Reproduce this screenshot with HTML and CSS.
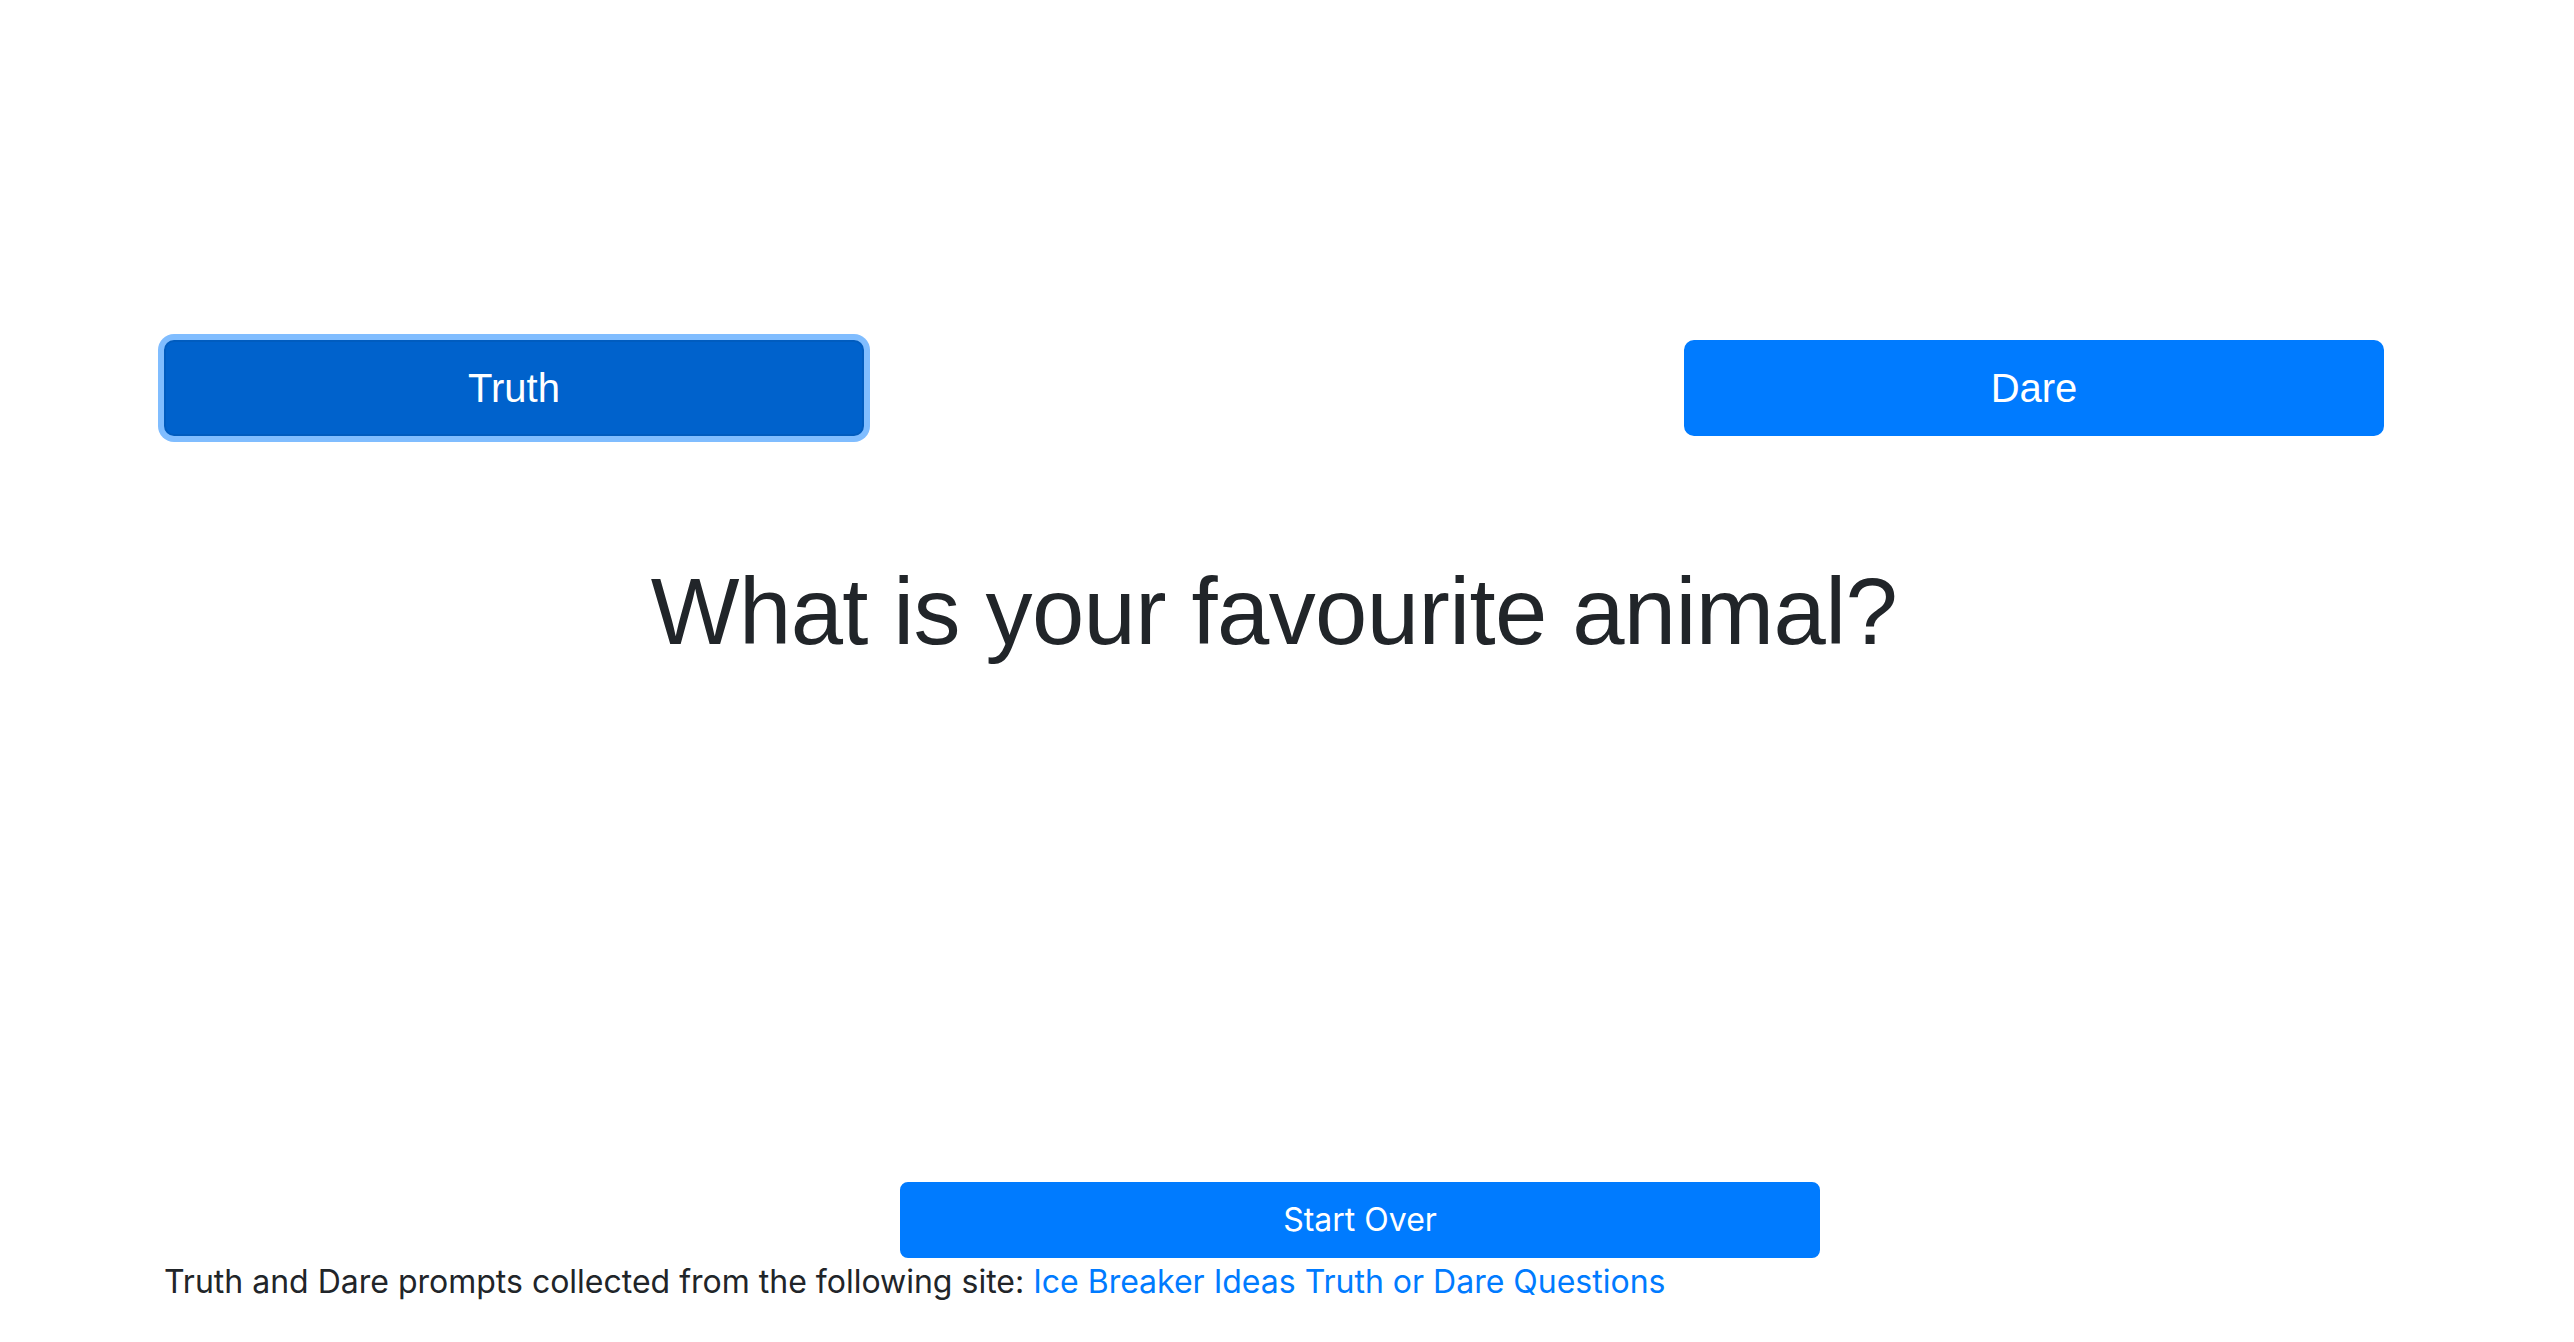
FILE: index.html
```html
<!DOCTYPE html>
<html lang="en">
<head>
<meta charset="utf-8">
<title>Truth or Dare</title>
<link rel="stylesheet" href="styles.css">
</head>
<body>
<main class="container">
  <div class="choices">
    <button class="btn btn-lg btn-focused" type="button">Truth</button>
    <button class="btn btn-lg" type="button">Dare</button>
  </div>
  <h1 class="prompt">What is your favourite animal?</h1>
  <div class="restart-row">
    <button class="btn btn-md" type="button">Start Over</button>
  </div>
  <p class="credit">Truth and Dare prompts collected from the following site: <a href="#">Ice Breaker Ideas Truth or Dare Questions</a></p>
</main>
</body>
</html>
```

FILE: styles.css
```css
html, body {
  margin: 0;
  padding: 0;
  background: #ffffff;
}

body {
  font-family: Inter, "Liberation Sans", sans-serif;
  font-size: 32px;
  line-height: 1.5;
  color: #212529;
}

.container {
  width: 2220px;
  margin-left: 164px;
  padding-top: 340px;
}

.choices {
  display: flex;
  justify-content: space-between;
}

.btn {
  font-family: Inter, "Liberation Sans", sans-serif;
  background: #007bff;
  border: 2px solid #007bff;
  color: #ffffff;
  text-align: center;
  cursor: pointer;
  padding: 0;
}

.btn-lg {
  width: 700px;
  height: 96px;
  font-family: "Liberation Sans", Arial, sans-serif;
  font-size: 40px;
  border-radius: 10px;
}

.btn-focused {
  background: #0062cc;
  border-color: #005cbf;
  box-shadow: 0 0 0 6px rgb(128, 189, 255);
}

.prompt {
  margin: 120px 0 0;
  font-family: "Liberation Sans", Arial, sans-serif;
  font-size: 94px;
  font-weight: 400;
  letter-spacing: -0.6px;
  line-height: 1.2;
  text-align: center;
}

.restart-row {
  display: flex;
  margin-top: 513px;
}

.btn-md {
  margin-left: 736px;
  width: 920px;
  height: 76px;
  font-size: 32px;
  border-radius: 8px;
}

.credit {
  margin: 0;
}

.credit a {
  color: #007bff;
  text-decoration: none;
}
```
